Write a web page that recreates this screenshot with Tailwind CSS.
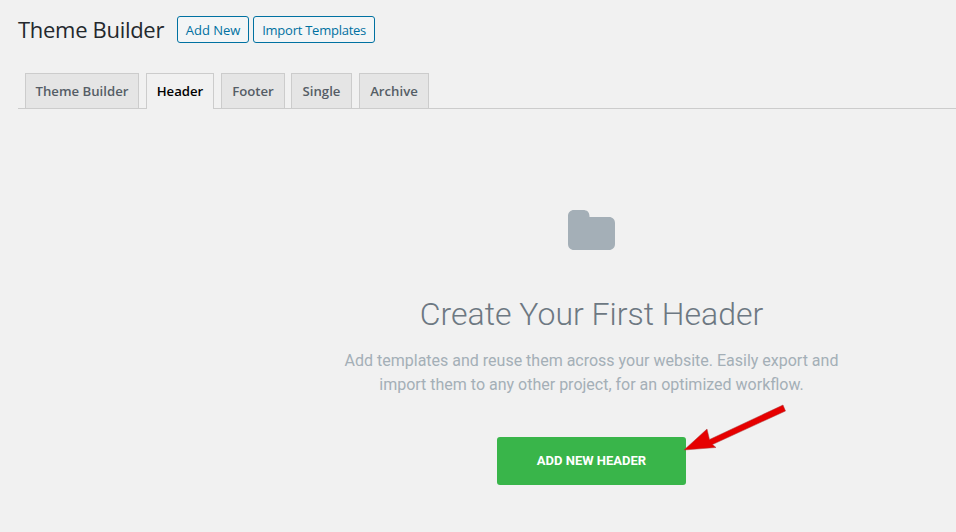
<!DOCTYPE html>
<html lang="en">
<head>
  <meta charset="UTF-8">
  <title>Theme Builder</title>
  <script src="https://cdn.jsdelivr.net/npm/@tailwindcss/browser@4"></script>
</head>
<body class="bg-[#f1f1f1] h-[532px] overflow-hidden relative font-['Open_Sans','Noto_Sans',sans-serif]">
  <div class="pl-[18px]">
    <div class="flex items-center h-[27px] mt-[16px]">
      <h1 class="text-[22px] tracking-[-0.3px] text-[#23282d] font-normal mr-[13px] leading-[27px]">Theme Builder</h1>
      <a class="h-[27px] w-[72px] pt-[2px] flex items-center justify-center border border-[#0071a1] rounded-[3px] bg-[#f3f5f6] text-[#0071a1] text-[13px] mr-[4px]">Add New</a>
      <a class="h-[27px] w-[122px] pt-[2px] flex items-center justify-center border border-[#0071a1] rounded-[3px] bg-[#f3f5f6] text-[#0071a1] text-[13px] tracking-[-0.25px]">Import Templates</a>
    </div>
    <div class="flex items-end h-[36px] mt-[30px] pl-[7px] gap-[7px] border-b border-[#cccccc]">
      <a class="h-[35px] w-[114px] pt-[2px] flex items-center justify-center border border-b-0 border-[#cccccc] bg-[#e5e5e5] text-[#555d66] text-[13.2px] font-semibold">Theme Builder</a>
      <a class="h-[36px] -mb-px w-[68px] flex items-center justify-center border border-b-0 border-[#cccccc] bg-[#f1f1f1] text-black text-[13.2px] font-semibold">Header</a>
      <a class="h-[35px] w-[64px] pt-[2px] flex items-center justify-center border border-b-0 border-[#cccccc] bg-[#e5e5e5] text-[#555d66] text-[13.2px] font-semibold">Footer</a>
      <a class="h-[35px] w-[61px] pt-[2px] -ml-px flex items-center justify-center border border-b-0 border-[#cccccc] bg-[#e5e5e5] text-[#555d66] text-[13.2px] font-semibold">Single</a>
      <a class="h-[35px] w-[70px] pt-[2px] flex items-center justify-center border border-b-0 border-[#cccccc] bg-[#e5e5e5] text-[#555d66] text-[13.2px] font-semibold">Archive</a>
    </div>
  </div>

  <div class="flex flex-col items-center ml-[227px] font-['Roboto',sans-serif]">
    <svg class="mt-[101px] w-[47px] h-[40px]" viewBox="0 0 47 40">
      <path fill="#a4afb7" d="M6 0H15C19 0 21.500 2 21.500 6.500V7H41C44.500 7 47 9.500 47 13V34C47 37.500 44.500 40 41 40H6C2.500 40 0 37.500 0 34V6C0 2.500 2.500 0 6 0Z"/>
    </svg>
    <h2 class="mt-[44px] text-[32px] leading-[40px] font-light text-[#6d7882]">Create Your First Header</h2>
    <p class="mt-[15px] text-[16px] leading-[24px] text-center text-[#a4afb7]">Add templates and reuse them across your website. Easily export and<br>import them to any other project, for an optimized workflow.</p>
    <a class="mt-[40px] w-[189px] h-[48px] flex items-center justify-center rounded-[3px] bg-[#39b54a] text-white text-[13px] font-bold uppercase">Add new header</a>
  </div>

  <!-- annotation arrow -->
  <svg class="absolute left-[680px] top-[400px] w-[110px] h-[60px]" viewBox="0 0 110 60">
    <path fill="#e60000" stroke="#a84040" stroke-width="0.5" d="M4 50 L27 29 L29.500 39.500 L103 5 L105.500 11 L32.500 44.500 L36 47.500 Z"/>
  </svg>
</body>
</html>
